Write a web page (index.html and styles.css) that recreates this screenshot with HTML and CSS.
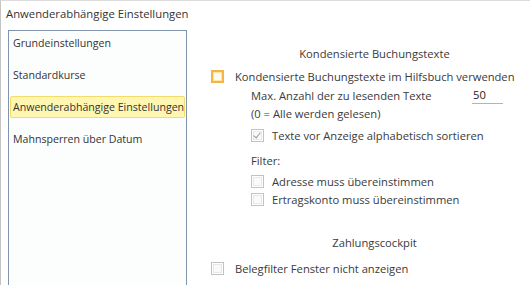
FILE: index.html
```html
<!DOCTYPE html>
<html lang="de">
<head>
    <meta charset="UTF-8">
    <title>Anwenderabhängige Einstellungen</title>
    <link rel="stylesheet" href="styles.css">
</head>
<body>
    <div class="window">
        <div class="window-title">Anwenderabhängige Einstellungen</div>
        <div class="window-body">
            <ul class="nav-list">
                <li>Grundeinstellungen</li>
                <li>Standardkurse</li>
                <li class="selected">Anwenderabhängige Einstellungen</li>
                <li>Mahnsperren über Datum</li>
            </ul>
            <div class="settings">
                <div class="group-title">Kondensierte Buchungstexte</div>
                <label class="option option-main">
                    <span class="check check-focus"></span>
                    Kondensierte Buchungstexte im Hilfsbuch verwenden
                </label>
                <div class="sub">
                    <div class="row row-max">
                        <span>Max. Anzahl der zu lesenden Texte</span>
                        <span class="num-input">50</span>
                    </div>
                    <div class="row">(0 = Alle werden gelesen)</div>
                    <label class="option option-sort">
                        <span class="check checked"></span>
                        Texte vor Anzeige alphabetisch sortieren
                    </label>
                    <div class="row row-filter">Filter:</div>
                    <label class="option option-first">
                        <span class="check"></span>
                        Adresse muss übereinstimmen
                    </label>
                    <label class="option">
                        <span class="check"></span>
                        Ertragskonto muss übereinstimmen
                    </label>
                </div>
                <div class="group-title group-second">Zahlungscockpit</div>
                <label class="option option-main option-last">
                    <span class="check"></span>
                    Belegfilter Fenster nicht anzeigen
                </label>
            </div>
        </div>
    </div>
</body>
</html>
```

FILE: styles.css
```css
body {
    margin: 0;
    padding: 0;
    background-color: #ffffff;
    font-family: "Open Sans", "Noto Sans", sans-serif;
    font-size: 11.2px;
    color: #3a3a3a;
    overflow: hidden;
}
.window {
    height: 285px;
    overflow: hidden;
    border-left: 1px solid #c4c4c4;
    border-top: 1px solid #dcdcdc;
    box-sizing: border-box;
}
.window-title {
    height: 29px;
    padding: 5px 0 0 5px;
    box-sizing: border-box;
    font-size: 11.3px;
    line-height: 16px;
    color: #333;
}
.window-body {
    display: flex;
}
.nav-list {
    list-style: none;
    margin: 0 0 0 7px;
    padding: 1px 1px 0 1px;
    width: 179px;
    height: 257px;
    box-sizing: border-box;
    border: 1px solid #8094ad;
    background-color: #fcfefe;
    flex-shrink: 0;
}
.nav-list li {
    height: 22px;
    line-height: 20px;
    padding: 0 2px;
    margin-bottom: 10px;
    border: 1px solid transparent;
    box-sizing: border-box;
    white-space: nowrap;
    font-size: 10.6px;
    color: #333;
}
.nav-list li.selected {
    background-color: #fff6b2;
    border-color: #f3db6e;
    border-radius: 2px;
}
.settings {
    flex: 1;
    padding: 16px 0 0 24px;
}
.group-title {
    line-height: 16px;
    text-align: center;
    padding-left: 8px;
}
.group-second {
    margin-top: 27px;
}
.row,
.option {
    display: flex;
    align-items: center;
    height: 18px;
    white-space: nowrap;
}
.option {
    gap: 8px;
}
.option-main {
    gap: 11px;
    margin-top: 5px;
}
.option-last {
    margin-top: 8px;
}
.sub {
    padding-left: 40px;
    margin-top: 1px;
}
.row-max {
    width: 252px;
    justify-content: space-between;
}
.num-input {
    width: 30px;
    padding-left: 1px;
    line-height: 16px;
    border-bottom: 1px solid #b4b4b4;
    color: #222;
}
.option-sort {
    margin-top: 4px;
}
.row-filter {
    margin-top: 7px;
}
.option-first {
    margin-top: 3px;
}
.check {
    width: 13px;
    height: 13px;
    box-sizing: border-box;
    border: 1px solid #c2c2c2;
    box-shadow: inset 0 0 0 1px #ffffff, inset 0 0 0 2px #e8e8e8;
    background-color: #fafafa;
    flex-shrink: 0;
    position: relative;
}
.check-focus {
    border: 2px solid #f5b443;
    box-shadow: inset 0 0 0 1px #fde3ae;
    background-color: #fffaf0;
}
.checked::after {
    content: "";
    position: absolute;
    left: 3px;
    top: 1px;
    width: 3px;
    height: 6px;
    border-right: 1.5px solid #9a9a9a;
    border-bottom: 1.5px solid #9a9a9a;
    transform: rotate(40deg);
}
```
